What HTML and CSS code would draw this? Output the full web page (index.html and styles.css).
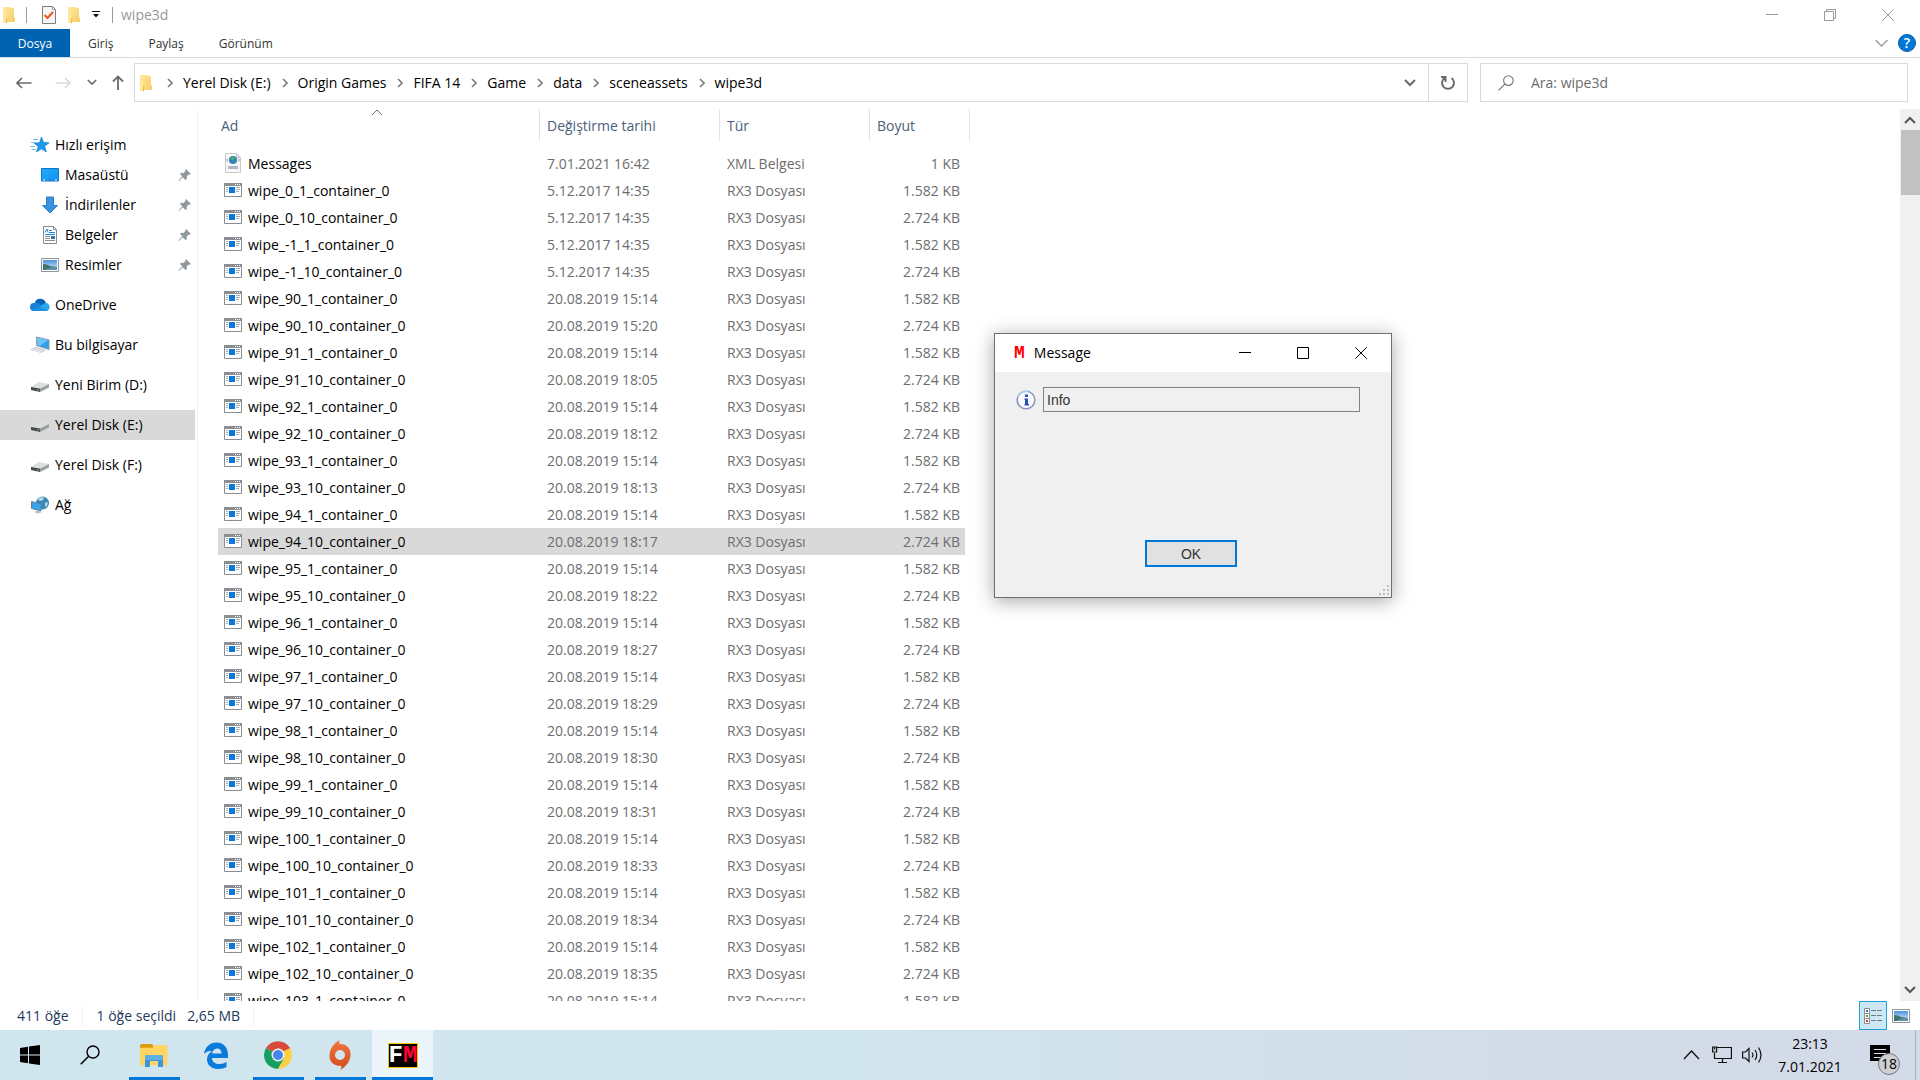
FILE: index.html
```html
<!DOCTYPE html>
<html lang="tr">
<head>
  <meta charset="UTF-8" />
  <meta name="viewport" content="width=device-width, initial-scale=1.0">
  <title>wipe3d</title>
  <link rel="stylesheet" href="styles.css">
</head>
<body>
  <!-- shared icons -->
  <svg class="sprite" width="0" height="0" aria-hidden="true">
    <defs>
      <linearGradient id="gFolder" x1="0" y1="0" x2="1" y2="1">
        <stop offset="0" stop-color="#ffe9a2" /><stop offset="1" stop-color="#f6cd62" />
      </linearGradient>
      <linearGradient id="gSky" x1="0" y1="0" x2="0" y2="1">
        <stop offset="0" stop-color="#4a90e0" /><stop offset="1" stop-color="#e4f2fb" />
      </linearGradient>
      <linearGradient id="gScreen" x1="0" y1="0" x2="1" y2="1">
        <stop offset="0" stop-color="#22aaff" /><stop offset="1" stop-color="#1590ec" />
      </linearGradient>
      <linearGradient id="gOrigin" x1="0" y1="0" x2="0" y2="1">
        <stop offset="0" stop-color="#f2743c" /><stop offset="1" stop-color="#d44a1e" />
      </linearGradient>
    </defs>
    <symbol id="folder" viewBox="0 0 12 18">
      <path d="M0 1h8v1h3v9l1 1v4H3l-3 1z" fill="url(#gFolder)" />
      <path d="M0 1l3 1.500v14.500L0 16z" fill="#ffe69a" />
      <path d="M3 12l1 1v4l-1 .5z" fill="#eab840" />
    </symbol>
    <symbol id="app" viewBox="0 0 18 14">
      <path d="M.5.5h17v13H.5z" fill="#fff" stroke="#8a8d91" />
      <path d="M0 0h18v3H0z" fill="#8a8d91" />
      <path d="M11 1h1v1h-1zM13 1h1v1h-1zM15 1h1v1h-1z" fill="#fff" />
      <path d="M5 4h6v6H5z" fill="#0a78d7" />
      <path d="M2 4.500h2M2 6.500h2M2 8.500h2M12 4.500h4M12 6.500h4M12 8.500h3" stroke="#a5a7aa" />
    </symbol>
    <symbol id="xml" viewBox="0 0 18 20">
      <path d="M1.500.5h11l4 4v15h-15z" fill="#f8f8f8" stroke="#c9c9c9" />
      <path d="M12.500.5v4h4" fill="#e4e4e4" stroke="#c9c9c9" />
      <circle cx="9" cy="7" r="4" fill="#2f7fc4" />
      <path d="M7 4l3-.5 1 2-2 2-2-1zM9 8l2 .5-1 2z" fill="#45b05a" />
      <path d="M4 5.500L2.500 7 4 8.500M14 5.500L15.500 7 14 8.500" fill="none" stroke="#888" />
      <path d="M4 13h10v3H4z" fill="#b4b4c8" />
    </symbol>
    <symbol id="drive" viewBox="0 0 18 10">
      <path d="M0 5L8 0l10 2-9 4z" fill="#dcdee0" />
      <path d="M0 5l9 1.500V10L0 8z" fill="#47494b" />
      <path d="M9 6.500L18 2v3.500L9 10z" fill="#9c9ea0" />
      <path d="M6 7.500h2v1H6z" fill="#5ad05a" />
    </symbol>
    <symbol id="pin" viewBox="0 0 14 14">
      <path d="M8 1l5 5-1.500.8-.8-.3-2 2 .2 2.500-1.400 1-2.800-2.800L1 13l-.5-.5L4.300 8.300 2 6l1-1.300 2.500.2 2-2L7.200 2z" fill="#8f989e" />
    </symbol>
    <symbol id="picture" viewBox="0 0 18 14">
      <path d="M.5.5h17v13H.5z" fill="#fff" stroke="#8f9396" />
      <path d="M2 2h14v10H2z" fill="url(#gSky)" />
      <path d="M2 6q4 0 7 2l7 1v3H2z" fill="#41756a" />
      <path d="M8 10q4-2 8-1v3H4z" fill="#5d8fa8" />
    </symbol>
    <symbol id="crumb" viewBox="0 0 6 10"><path d="M1 1l4 4-4 4" fill="none" stroke="#7c7c7c" stroke-width="1.600" /></symbol>
    <symbol id="down" viewBox="0 0 12 8"><path d="M1 1l5 5 5-5" fill="none" stroke="currentColor" stroke-width="2" /></symbol>
    <symbol id="search" viewBox="0 0 20 20">
      <circle cx="13" cy="7" r="6" fill="none" stroke="currentColor" stroke-width="1.400" />
      <path d="M8.500 11.500L.7 19.300" fill="none" stroke="currentColor" stroke-width="1.500" />
    </symbol>
    <symbol id="min" viewBox="0 0 12 12"><path d="M0 5.500h12" stroke="currentColor" /></symbol>
    <symbol id="close" viewBox="0 0 12 12"><path d="M.3.3l11.400 11.400M11.700.3L.3 11.700" stroke="currentColor" /></symbol>
  </svg>

  <header class="titlebar">
    <svg class="folder-icon" width="12" height="18"><use href="#folder" /></svg>
    <span class="divider"></span>
    <button type="button" class="quick" aria-label="Özellikler">
      <svg width="14" height="18" viewBox="0 0 14 18">
        <path d="M.5.500h10l3 3v14H.5z" fill="#f6f6f6" stroke="#7d7d7d" />
        <path d="M10.500.5v3h3" fill="none" stroke="#9d9d9d" />
        <path d="M2.500 9l3 3L11 6" fill="none" stroke="#f0561d" stroke-width="2" />
      </svg>
    </button>
    <button type="button" class="quick" aria-label="Yeni klasör"><svg width="12" height="18"><use href="#folder" /></svg></button>
    <button type="button" class="quick" aria-label="Özelleştir">
      <svg width="8" height="8" viewBox="0 0 8 8"><path d="M0 .5h8" stroke="#111" /><path d="M1 3h6L4 6.500z" fill="#111" /></svg>
    </button>
    <span class="divider"></span>
    <span class="window-title">wipe3d</span>
    <div class="window-buttons">
      <button type="button" aria-label="Simge durumuna küçült"><svg width="12" height="12"><use href="#min" /></svg></button>
      <button type="button" aria-label="Önceki boyut">
        <svg width="12" height="12" viewBox="0 0 12 12" fill="none" stroke="currentColor"><path d="M.5 2.500h9v9h-9zM2.500 2.500v-2h9v9h-2" /></svg>
      </button>
      <button type="button" aria-label="Kapat"><svg width="12" height="12"><use href="#close" /></svg></button>
    </div>
  </header>

  <div class="tabs">
    <button type="button" class="tab active">Dosya</button>
    <button type="button" class="tab">Giriş</button>
    <button type="button" class="tab">Paylaş</button>
    <button type="button" class="tab">Görünüm</button>
    <div class="tabs-right">
      <button type="button" aria-label="Şeridi genişlet">
        <svg width="13" height="8" viewBox="0 0 13 8"><path d="M.5 1l6 6 6-6" fill="none" stroke="#9a9a9a" stroke-width="1.300" /></svg>
      </button>
      <button type="button" class="help">?</button>
    </div>
  </div>

  <div class="toolbar">
    <div class="nav-buttons">
      <button type="button" aria-label="Geri"><svg width="16" height="12" viewBox="0 0 16 12" fill="none" stroke="#6b6b6b" stroke-width="1.600"><path d="M15.500 6H1M6 1L1 6l5 5" /></svg></button>
      <button type="button" aria-label="İleri"><svg width="16" height="12" viewBox="0 0 16 12" fill="none" stroke="#dadada" stroke-width="1.600"><path d="M.5 6H15M10 1l5 5-5 5" /></svg></button>
      <button type="button" class="recent" aria-label="Son konumlar"><svg width="10" height="7"><use href="#down" /></svg></button>
      <button type="button" aria-label="Yukarı"><svg width="12" height="15" viewBox="0 0 12 15" fill="none" stroke="#6b6b6b" stroke-width="1.800"><path d="M6 15V1.500M1 6.500l5-5 5 5" /></svg></button>
    </div>
    <nav class="address">
      <svg class="address-icon" width="12" height="18"><use href="#folder" /></svg>
      <svg width="6" height="10"><use href="#crumb" /></svg><a href="#">Yerel Disk (E:)</a>
      <svg width="6" height="10"><use href="#crumb" /></svg><a href="#">Origin Games</a>
      <svg width="6" height="10"><use href="#crumb" /></svg><a href="#">FIFA 14</a>
      <svg width="6" height="10"><use href="#crumb" /></svg><a href="#">Game</a>
      <svg width="6" height="10"><use href="#crumb" /></svg><a href="#">data</a>
      <svg width="6" height="10"><use href="#crumb" /></svg><a href="#">sceneassets</a>
      <svg width="6" height="10"><use href="#crumb" /></svg><a href="#">wipe3d</a>
      <button type="button" class="history" aria-label="Önceki konumlar"><svg width="12" height="8"><use href="#down" /></svg></button>
      <button type="button" class="refresh" aria-label="Yenile">
        <svg width="16" height="16" viewBox="0 0 16 16" fill="none" stroke="#6b6b6b" stroke-width="2"><path d="M11.500 3A6 6 0 1 1 4.500 3M1 2h4.500v5" /></svg>
      </button>
    </nav>
    <div class="search">
      <label for="search" aria-label="Ara"><svg width="16" height="16"><use href="#search" /></svg></label>
      <input type="text" id="search" placeholder="Ara: wipe3d" />
    </div>
  </div>

  <main class="content">
    <nav class="sidebar">
      <div class="group">
        <a href="#">
          <svg width="20" height="18" viewBox="0 0 20 18">
            <path d="M11.500 1l2 5.500 5.500.2-4.300 3.600 1.600 5.700-4.800-3.200L6.500 16l1.700-5.400L4 7l5.500-.3z" fill="#1d9bea" stroke="#137cc6" stroke-width=".7" />
            <path d="M3 3.500h5M1 6.500h3M0 10.500h5M2 13.500h4" stroke="#6cbef2" />
          </svg>
          <span>Hızlı erişim</span>
        </a>
        <a href="#" class="child">
          <svg width="18" height="14" viewBox="0 0 18 14"><path d="M.5.5h17v12.500H.5z" fill="url(#gScreen)" stroke="#1177c2" /><path d="M2 12h2M14 12h2" stroke="#fff" /></svg>
          <span>Masaüstü</span><svg class="pin" width="14" height="14"><use href="#pin" /></svg>
        </a>
        <a href="#" class="child">
          <svg width="18" height="18" viewBox="0 0 18 18"><path d="M5.500 1h7v8.500h4L9 17 1.500 9.500h4z" fill="#3a93e0" stroke="#2b7fca" /></svg>
          <span>İndirilenler</span><svg class="pin" width="14" height="14"><use href="#pin" /></svg>
        </a>
        <a href="#" class="child">
          <svg width="18" height="18" viewBox="0 0 18 18">
            <path d="M2.500.5h10l3 3v14h-13z" fill="#fff" stroke="#8b8b8b" /><path d="M12.500.5v3h3" fill="none" stroke="#8b8b8b" />
            <path d="M4 6.500l2-3.500 1 3.500M8 4.500h3M8 6.500h6M4 8.500h10" fill="none" stroke="#2489d6" />
            <path d="M4 10.500h5M4 12.500h5M4 14.500h10" stroke="#8f8f8f" /><path d="M10 10h4v3h-4z" fill="#3273a8" />
          </svg>
          <span>Belgeler</span><svg class="pin" width="14" height="14"><use href="#pin" /></svg>
        </a>
        <a href="#" class="child">
          <svg width="18" height="14"><use href="#picture" /></svg>
          <span>Resimler</span><svg class="pin" width="14" height="14"><use href="#pin" /></svg>
        </a>
      </div>
      <div class="group">
        <a href="#">
          <svg width="20" height="14" viewBox="0 0 20 14">
            <path d="M5 4a6 6 0 0 1 11 1l-5 5-6-2z" fill="#0a63b8" />
            <path d="M4 13a4 4 0 0 1 0-8q3-1 6 1l6 5-3 2z" fill="#1681d8" />
            <path d="M10 8.500L15 5a4 4 0 0 1 1 8z" fill="#28a8ea" />
            <path d="M1.500 12L10 8.500l8 4L16 13H4q-1.500 0-2.500-1z" fill="#2090e0" />
          </svg>
          <span>OneDrive</span>
        </a>
      </div>
      <div class="group">
        <a href="#">
          <svg width="20" height="18" viewBox="0 0 20 18">
            <path d="M6.500 1l12.500 3v9.500L6.500 9.500z" fill="#2ea0ea" stroke="#8199aa" />
            <path d="M7 1.500L18 4l-8 6-3-1z" fill="#6cc3f8" />
            <path d="M0 13.500L6 11l10 3-5 3z" fill="#c5c9cd" /><path d="M3 13.500l8 2.500M5 12.500l8 2.500" stroke="#f1f1f1" />
          </svg>
          <span>Bu bilgisayar</span>
        </a>
      </div>
      <div class="group"><a href="#"><svg width="20" height="16" viewBox="-1 -5 20 16"><use href="#drive" width="18" height="10" /></svg><span>Yeni Birim (D:)</span></a></div>
      <div class="group"><a href="#" class="selected"><svg width="20" height="16" viewBox="-1 -5 20 16"><use href="#drive" width="18" height="10" /></svg><span>Yerel Disk (E:)</span></a></div>
      <div class="group"><a href="#"><svg width="20" height="16" viewBox="-1 -5 20 16"><use href="#drive" width="18" height="10" /></svg><span>Yerel Disk (F:)</span></a></div>
      <div class="group">
        <a href="#">
          <svg width="20" height="18" viewBox="0 0 20 18">
            <circle cx="12.500" cy="7" r="6.500" fill="#3c88b4" />
            <path d="M9 2l4-1 1 2-3 2-3-1zM15 7l3-1-1 4-2 1z" fill="#b5dbea" />
            <path d="M1.500 5.500L11 8v7L1.500 12.500z" fill="#35a5ef" stroke="#5f8299" />
            <path d="M4 16l4-1.500 4 1.500-4 1.500z" fill="#b9bdc1" />
          </svg>
          <span>Ağ</span>
        </a>
      </div>
    </nav>

    <section class="files">
      <table>
        <thead>
          <tr>
            <th class="name">Ad<svg class="sort" width="12" height="7" viewBox="0 0 12 7"><path d="M1 6l5-5 5 5" fill="none" stroke="#6f6f6f" /></svg></th>
            <th class="date">Değiştirme tarihi</th>
            <th class="type">Tür</th>
            <th class="size">Boyut</th>
          </tr>
        </thead>
        <tbody id="fileRows"></tbody>
      </table>
    </section>

    <div class="scrollbar">
      <svg width="12" height="8" viewBox="0 0 12 8"><path d="M1 7l5-5 5 5" fill="none" stroke="#555" stroke-width="2" /></svg>
      <div class="thumb"></div>
      <svg class="bottom" width="12" height="8"><use href="#down" /></svg>
    </div>
  </main>

  <footer class="statusbar">
    <span class="status">411 öğe</span>
    <span class="status">1 öğe seçildi<span class="bytes">2,65 MB</span></span>
    <div class="views">
      <button type="button" class="view active" aria-label="Ayrıntılar">
        <svg width="18" height="16" viewBox="0 0 18 16">
          <path d="M.5.5h5v5h-5zM.5 5.500h5v5h-5zM.5 10.500h5v5h-5z" fill="#fff" stroke="#8d8d8d" />
          <path d="M2 2h2v2H2z" fill="#2580c8" /><path d="M2 7h2v2H2z" fill="#6d9c34" /><path d="M2 12h2v2H2z" fill="#d03a28" />
          <path d="M7 2.500h5M13 2.500h5M7 7.500h5M13 7.500h5M7 12.500h5M13 12.500h5" stroke="#777" />
        </svg>
      </button>
      <button type="button" class="view" aria-label="Büyük simgeler"><svg width="18" height="14"><use href="#picture" /></svg></button>
    </div>
  </footer>

  <div class="taskbar">
    <button type="button" class="task" aria-label="Başlat">
      <svg width="20" height="20" viewBox="0 0 20 20"><path d="M0 3l8-1.200v7.700H0zM9 1.600L20 0v9.500H9zM0 10.500h8v7.700L0 17zM9 10.500h11V20L9 18.400z" fill="#000" /></svg>
    </button>
    <button type="button" class="task find" aria-label="Ara"><svg width="20" height="20"><use href="#search" /></svg></button>
    <button type="button" class="task app open" aria-label="Dosya Gezgini">
      <svg width="28" height="24" viewBox="0 0 28 24">
        <path d="M0 2.500Q0 1 1.500 1H12l2 3H0z" fill="#dc9b10" />
        <path d="M0 4h13l1.500-2H26q1.500 0 1.500 1.500V21q0 1.500-1.500 1.500H1.500Q0 22.500 0 21z" fill="#ffd566" />
        <path d="M0 4h13v1H0z" fill="#e9a918" />
        <path d="M5 24V14q0-2 2-2h14q2 0 2 2v10h-5v-6h-8v6z" fill="#3b97dc" />
        <path d="M5 14q0-2 2-2h14q2 0 2 2v3H5z" fill="#60b0e8" />
      </svg>
    </button>
    <button type="button" class="task app" aria-label="Edge">
      <svg width="26" height="27" viewBox="0 0 26 27">
        <path d="M1 12C2 5 7 .5 13.500.5 21 .5 25 6 25 13v3H9c0 4 3.500 6 7.500 6 3 0 5-.8 7-2v5c-2 1.200-5 1.900-8.500 1.900C8 26.900 4 22.500 4 17.500c0-3.500 1.800-6.500 5-8.500C5 8.500 2.500 10 1 12zM9.200 11.500h9.300c0-3-1.300-5-4.300-5s-4.600 2.200-5 5z" fill="#0a7adb" fill-rule="evenodd" />
      </svg>
    </button>
    <button type="button" class="task app open" aria-label="Chrome">
      <svg width="28" height="28" viewBox="0 0 28 28">
        <path d="M14 14L2 7.100A14 14 0 0 1 26.100 7z" fill="#d94a3d" />
        <path d="M14 14L1.900 7A14 14 0 0 0 14 28l6-10.500z" fill="#15a05f" />
        <path d="M14 14l6 3.500L14 28A14 14 0 0 0 26.100 7H14z" fill="#ffce42" />
        <path d="M14 7h12.100L20 10z" fill="#d94a3d" />
        <circle cx="14" cy="14" r="6.500" fill="#f3f3f3" /><circle cx="14" cy="14" r="5" fill="#4587ee" />
      </svg>
    </button>
    <button type="button" class="task app open" aria-label="Origin">
      <svg width="24" height="30" viewBox="0 0 24 30">
        <path d="M12 0c-1 1.500-1 2.500-.5 4C18 3.500 22.500 8 22.500 14c0 7-4 12-10 16 1-1.500 1-2.800.7-4.200C6 26.300 1.500 22 1.500 16 1.500 8.500 6 3 12 0zM12 10a5 5 0 1 0 0 10 5 5 0 0 0 0-10z" fill="url(#gOrigin)" fill-rule="evenodd" />
      </svg>
    </button>
    <button type="button" class="task app open current" aria-label="File Master"><span class="fm"><b>F</b><b class="red">M</b></span></button>

    <div class="tray">
      <button type="button" class="overflow" aria-label="Gizli simgeler"><svg width="17" height="10" viewBox="0 0 17 10"><path d="M1 9l7.500-8L16 9" fill="none" stroke="#111" stroke-width="1.300" /></svg></button>
      <button type="button" aria-label="Ağ bağlantısı">
        <svg width="20" height="18" viewBox="0 0 20 18" fill="none" stroke="#111" stroke-width="1.200"><path d="M5 1.500h14.400v11H2.500V7M.6 1h4v5H.6zM2.600 1v2.500M10.500 12.500V16M6 16.500h9" /></svg>
      </button>
      <button type="button" aria-label="Ses">
        <svg width="21" height="18" viewBox="0 0 21 18" fill="none" stroke="#111" stroke-width="1.200"><path d="M.6 6h2.900L7 2.500v13L3.500 12H.6zM10 6.500q2 2.500 0 5M13 4q3.500 5 0 10M16.500 1.500q5 7.500 0 15" /></svg>
      </button>
      <div class="clock"><span>23:13</span><span>7.01.2021</span></div>
      <button type="button" class="notify" aria-label="Bildirimler">
        <svg width="20" height="20" viewBox="0 0 20 20"><path d="M0 0h20v16h-7l-4 4v-4H0z" fill="#000" /><path d="M4 4.500h12M4 8.500h12M4 12.500h7" stroke="#d3dbe9" /></svg>
        <span class="badge">18</span>
      </button>
      <span class="peek"></span>
    </div>
  </div>

  <div class="dialog" role="dialog" aria-label="Message">
    <div class="dialog-title">
      <b class="dialog-icon">M</b>
      <span>Message</span>
      <div class="dialog-buttons">
        <button type="button" aria-label="Küçült"><svg width="12" height="12"><use href="#min" /></svg></button>
        <button type="button" aria-label="Büyüt"><svg width="12" height="12" viewBox="0 0 12 12"><path d="M.5.5h11v11H.5z" fill="none" stroke="#000" /></svg></button>
        <button type="button" aria-label="Kapat"><svg width="12" height="12"><use href="#close" /></svg></button>
      </div>
    </div>
    <form class="dialog-body">
      <div class="info-row">
        <label for="info" aria-label="Bilgi">
          <svg width="20" height="20" viewBox="0 0 20 20">
            <circle cx="10" cy="10" r="8.800" fill="#fdfdff" stroke="#8696bd" stroke-width="1.600" />
            <path d="M2 7a8.800 8.800 0 0 1 10-5.500" fill="none" stroke="#a9d3ec" stroke-width="1.600" />
            <path d="M9 4.500h3v2.500H9zM8.500 8.500H12V14h1v1.500H8.500V14H9v-4h-.5z" fill="#2c4fc0" />
          </svg>
        </label>
        <input type="text" id="info" value="Info" readonly />
      </div>
      <button type="button" class="ok">OK</button>
    </form>
    <svg class="grip" width="11" height="11" viewBox="0 0 11 11"><path d="M8 0h2v2H8zM4 4h2v2H4zM8 4h2v2H8zM0 8h2v2H0zM4 8h2v2H4zM8 8h2v2H8z" fill="#bdbdbd" /></svg>
  </div>

<script>
  const files = [
    ['Messages', '7.01.2021 16:42', 'XML Belgesi', '1 KB'],
    ['wipe_0_1_container_0', '5.12.2017 14:35'],
    ['wipe_0_10_container_0', '5.12.2017 14:35'],
    ['wipe_-1_1_container_0', '5.12.2017 14:35'],
    ['wipe_-1_10_container_0', '5.12.2017 14:35']
  ];
  // time of the _10 file for every wipe from 90 up
  const times = ['15:20', '18:05', '18:12', '18:13', '18:17', '18:22', '18:27', '18:29', '18:30', '18:31', '18:33', '18:34', '18:35'];
  times.forEach((time, i) => {
    files.push([`wipe_${90 + i}_1_container_0`, '20.08.2019 15:14']);
    files.push([`wipe_${90 + i}_10_container_0`, `20.08.2019 ${time}`]);
  });
  files.push(['wipe_103_1_container_0', '20.08.2019 15:14']);

  document.getElementById('fileRows').innerHTML = files.map(([name, date, type, size]) => {
    const icon = type ? '<svg width="18" height="20"><use href="#xml" /></svg>' : '<svg width="18" height="14"><use href="#app" /></svg>';
    const kb = size || (name.includes('_10_container') ? '2.724 KB' : '1.582 KB');
    return `<tr${name === 'wipe_94_10_container_0' ? ' class="selected"' : ''}>
      <td class="name"><div class="file">${icon}<span>${name}</span></div></td>
      <td>${date}</td><td>${type || 'RX3 Dosyası'}</td><td class="size">${kb}</td></tr>`;
  }).join('');
</script>
</body>
</html>
```
FILE: styles.css
```css
* {
  box-sizing: border-box;
}
body {
  margin: 0;
  height: 100vh;
  display: flex;
  flex-direction: column;
  overflow: hidden;
  background-color: #fff;
  color: #000;
  font-family: "Open Sans", "Noto Sans", sans-serif;
  font-size: 14px;
  line-height: 20px;
}
button {
  display: flex;
  align-items: center;
  justify-content: center;
  padding: 0;
  border: none;
  background: none;
  color: inherit;
  font: inherit;
}
a {
  color: inherit;
  text-decoration: none;
}
svg {
  display: block;
  flex: none;
}
.sprite {
  position: absolute;
}

/* title bar */
.titlebar {
  display: flex;
  align-items: center;
  flex: none;
  height: 29px;
  padding-left: 3px;
  color: #999;
}
.divider {
  width: 1px;
  height: 16px;
  margin: 0 15px 0 11px;
  background-color: #9a9a9a;
}
.quick {
  margin-right: 12px;
}
.quick + .divider {
  margin: 0 8px 0 0;
}
.window-buttons {
  display: flex;
  margin-left: auto;
  padding-right: 3px;
}
.window-buttons button {
  width: 58px;
  height: 26px;
}

/* ribbon tabs */
.tabs {
  display: flex;
  flex: none;
  height: 29px;
  border-bottom: 1px solid #dadbdc;
  font-size: 12px;
  color: #333;
}
.tab {
  padding: 1px 17px 0 18px;
}
.tab.active {
  width: 70px;
  padding: 1px 0 0;
  background-color: #0063b1;
  color: #fff;
}
.tabs-right {
  display: flex;
  align-items: center;
  gap: 10px;
  margin-left: auto;
  padding-right: 4px;
}
.help {
  width: 18px;
  height: 18px;
  border-radius: 50%;
  background-color: #0078d7;
  border: 1px solid #0a5ca8;
  color: #fff;
  font-size: 14px;
  font-weight: 600;
}

/* toolbar */
.toolbar {
  display: flex;
  flex: none;
  padding: 5px 12px 7px 16px;
}
.nav-buttons {
  display: flex;
  align-items: center;
  width: 118px;
  gap: 23px;
  color: #6b6b6b;
}
.nav-buttons .recent {
  margin: 0 -8px 0 -7px;
}
.address {
  display: flex;
  align-items: center;
  flex: 1;
  height: 39px;
  border: 1px solid #d9d9d9;
  padding-left: 5px;
}
.address a {
  margin: 0 11px 0 10px;
}
.address-icon {
  margin-right: 15px;
}
.history,
.refresh {
  width: 39px;
  height: 100%;
  color: #6b6b6b;
}
.history {
  width: 36px;
  margin-left: auto;
}
.refresh {
  border-left: 1px solid #d9d9d9;
}
.search {
  display: flex;
  align-items: center;
  width: 428px;
  height: 39px;
  margin-left: 12px;
  padding-left: 17px;
  gap: 17px;
  border: 1px solid #d9d9d9;
  color: #767676;
}
.search input {
  flex: 1;
  border: none;
  outline: none;
  padding: 0;
  font: inherit;
}
.search input::placeholder {
  color: #6d6d6d;
}

/* main area */
.content {
  display: flex;
  flex: 1;
  min-height: 0;
}
.sidebar {
  width: 198px;
  padding-top: 21px;
  border-right: 1px solid #f3f3f3;
}
.group {
  margin-bottom: 10px;
}
.sidebar a {
  display: flex;
  align-items: center;
  height: 30px;
  width: 195px;
  padding-left: 30px;
  gap: 5px;
}
.sidebar .child {
  padding-left: 41px;
  gap: 6px;
}
.sidebar .selected {
  background-color: #d9d9d9;
}
.pin {
  margin: 0 3px 0 auto;
}
.files {
  flex: 1;
  padding-left: 20px;
  overflow: hidden;
}
table {
  table-layout: fixed;
  width: 752px;
  border-spacing: 0;
}
th {
  position: relative;
  width: 180px;
  height: 32px;
  padding: 2px 7px 0;
  border-right: 1px solid #e2e2e2;
  font-weight: normal;
  text-align: left;
  color: #4c607a;
}
th.name {
  width: 322px;
  padding-left: 3px;
}
th.type {
  width: 150px;
}
th.size {
  width: 100px;
}
.sort {
  position: absolute;
  left: calc(50% - 8px);
  top: 0;
}
tbody::before {
  content: "";
  display: block;
  height: 9px;
}
td {
  height: 27px;
  padding: 0 7px;
  color: #6d6d6d;
  white-space: nowrap;
}
td.name {
  padding: 0 6px;
  color: #000;
}
td.size {
  padding-right: 5px;
  border-right: 5px solid transparent;
  background-clip: padding-box;
  text-align: right;
}
tr.selected td {
  background-color: #d9d9d9;
}
.file {
  display: flex;
  align-items: center;
  gap: 6px;
}
.file svg {
  margin-bottom: 2px;
}
.scrollbar {
  display: flex;
  flex-direction: column;
  align-items: center;
  width: 20px;
  padding-top: 7px;
  background-color: #f0f0f0;
  color: #555;
}
.thumb {
  width: 19px;
  height: 65px;
  margin: 6px 0 auto;
  background-color: #c1c1c1;
}
.scrollbar .bottom {
  margin-bottom: 7px;
}

/* status bar */
.statusbar {
  display: flex;
  align-items: center;
  flex: none;
  height: 29px;
  padding-left: 17px;
  color: #1e395b;
}
.status {
  margin-right: 14px;
  padding-right: 13px;
  border-right: 1px solid #f0f0f0;
}
.bytes {
  margin-left: 11px;
}
.views {
  display: flex;
  margin-left: auto;
  padding-right: 5px;
}
.view {
  width: 28px;
  height: 29px;
}
.view.active {
  background-color: #cce8f6;
  border: 1px solid #26a0da;
}

/* taskbar */
.taskbar {
  display: flex;
  flex: none;
  height: 50px;
  background: linear-gradient(to right, #d0e6ee, #d1e5ee 45%, #d3dbe9 85%);
}
.task {
  width: 60px;
}
.find {
  margin-right: 3px;
}
.app {
  width: 62px;
  position: relative;
}
.open::after {
  content: "";
  position: absolute;
  bottom: 0;
  left: 6px;
  right: 5px;
  height: 3px;
  background-color: #0078d7;
}
.current {
  width: 61px;
  margin-left: 1px;
  background-color: #ecf5f9;
}
.current::after {
  left: 0;
  right: 0;
}
.fm {
  display: flex;
  width: 30px;
  height: 25px;
  border: 1px solid #f2c500;
  background-color: #000;
  color: #fff;
  font-family: "Liberation Mono", monospace;
  font-size: 24px;
  line-height: 24px;
}
.fm b {
  flex: 1;
}
.fm .red {
  color: #ff0033;
}
.tray {
  display: flex;
  align-items: center;
  margin-left: auto;
  gap: 10px;
}
.overflow {
  margin-right: 2px;
}
.clock {
  display: flex;
  flex-direction: column;
  align-items: center;
  width: 80px;
  margin-left: -3px;
  line-height: 23px;
}
.notify {
  position: relative;
  width: 40px;
  margin-right: 5px;
}
.badge {
  position: absolute;
  left: 18px;
  top: 8px;
  width: 22px;
  height: 22px;
  border: 1px solid #777;
  border-radius: 50%;
  background-color: #cdcfd3;
  line-height: 20px;
}
.peek {
  width: 5px;
  height: 50px;
  border-left: 1px solid #a7b0bd;
}

/* message window */
.dialog {
  position: absolute;
  left: 994px;
  top: 333px;
  width: 398px;
  height: 265px;
  display: flex;
  flex-direction: column;
  border: 1px solid #6f6f6f;
  background-color: #f0f0f0;
  box-shadow: 0 3px 18px rgba(0,0,0,0.35);
}
.dialog-title {
  display: flex;
  align-items: center;
  height: 38px;
  padding-left: 19px;
  gap: 9px;
  background-color: #fff;
}
.dialog-icon {
  color: #f00;
  font-family: "Liberation Mono", monospace;
  font-size: 18px;
}
.dialog-buttons {
  display: flex;
  margin-left: auto;
  padding-right: 1px;
}
.dialog-buttons button {
  width: 58px;
  height: 38px;
}
.dialog-body {
  display: flex;
  flex-direction: column;
  align-items: center;
  flex: 1;
  padding: 15px 31px 30px 21px;
  font-family: "Liberation Sans", Arial, sans-serif;
}
.info-row {
  display: flex;
  align-items: center;
  width: 100%;
  gap: 7px;
}
.info-row input {
  flex: 1;
  height: 25px;
  padding: 0 3px;
  border: 1px solid #828282;
  background-color: #f0f0f0;
  color: #333;
  font: inherit;
}
.ok {
  width: 92px;
  height: 27px;
  margin: auto 0 0 6px;
  border: 2px solid #0078d7;
  background-color: #e1e1e1;
  color: #333;
}
.grip {
  position: absolute;
  right: 1px;
  bottom: 1px;
}
```
